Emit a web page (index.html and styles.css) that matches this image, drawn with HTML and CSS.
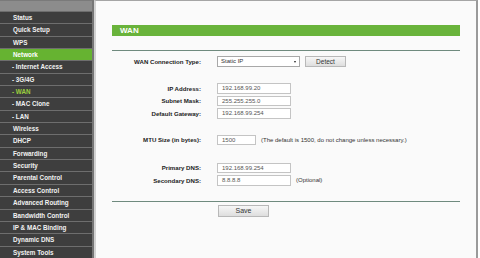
FILE: index.html
```html
<!DOCTYPE html>
<html>
<head>
<meta charset="utf-8">
<link rel="stylesheet" href="styles.css">
</head>
<body>
<div class="page">
  <nav class="sidebar">
    <div class="side-top"></div>
    <ul class="menu">
      <li>Status</li>
      <li>Quick Setup</li>
      <li>WPS</li>
      <li class="active">Network</li>
      <li class="sub">- Internet Access</li>
      <li class="sub">- 3G/4G</li>
      <li class="sub current">- WAN</li>
      <li class="sub">- MAC Clone</li>
      <li class="sub">- LAN</li>
      <li>Wireless</li>
      <li>DHCP</li>
      <li>Forwarding</li>
      <li>Security</li>
      <li>Parental Control</li>
      <li>Access Control</li>
      <li>Advanced Routing</li>
      <li>Bandwidth Control</li>
      <li>IP &amp; MAC Binding</li>
      <li>Dynamic DNS</li>
      <li>System Tools</li>
    </ul>
  </nav>
  <main class="main">
    <div class="title-bar">WAN</div>
    <div class="rule"></div>
    <div class="row row-conn">
      <span class="label">WAN Connection Type:</span>
      <span class="field">
        <span class="select">Static IP<span class="arrow"></span></span>
        <span class="btn btn-detect">Detect</span>
      </span>
    </div>
    <div class="row row-first">
      <span class="label">IP Address:</span>
      <span class="field"><span class="input">192.168.99.20</span></span>
    </div>
    <div class="row">
      <span class="label">Subnet Mask:</span>
      <span class="field"><span class="input">255.255.255.0</span></span>
    </div>
    <div class="row">
      <span class="label">Default Gateway:</span>
      <span class="field"><span class="input">192.168.99.254</span></span>
    </div>
    <div class="row row-mtu">
      <span class="label">MTU Size (in bytes):</span>
      <span class="field"><span class="input input-short">1500</span><span class="note">(The default is 1500, do not change unless necessary.)</span></span>
    </div>
    <div class="row row-dns">
      <span class="label">Primary DNS:</span>
      <span class="field"><span class="input">192.168.99.254</span></span>
    </div>
    <div class="row">
      <span class="label">Secondary DNS:</span>
      <span class="field"><span class="input">8.8.8.8</span><span class="note">(Optional)</span></span>
    </div>
    <div class="rule rule-bottom"></div>
    <div class="save-row">
      <span class="btn btn-save">Save</span>
    </div>
  </main>
</div>
</body>
</html>
```
FILE: styles.css
```css
* { box-sizing: border-box; }
html, body { margin: 0; padding: 0; }
body {
  width: 480px;
  height: 258px;
  overflow: hidden;
  background: #ffffff;
  font-family: "Liberation Sans", Arial, sans-serif;
}
.page {
  display: flex;
  height: 258px;
}
.sidebar {
  width: 94px;
  flex: none;
  background: #3e3e3e;
  border-right: 2px solid #767676;
  display: flex;
  flex-direction: column;
}
.side-top {
  height: 11px;
  background: #8c8c8c;
  border-top: 1px solid #7a7a7a;
}
.menu {
  list-style: none;
  margin: 0;
  padding: 0;
}
.menu li {
  height: 12.35px;
  border-top: 1px solid #6e6e6e;
  padding-left: 13px;
  color: #f2f2f2;
  font-weight: bold;
  font-size: 6.3px;
  line-height: 11.35px;
  white-space: nowrap;
  background: #3e3e3e;
}
.menu li.sub { padding-left: 12px; }
.menu li.active {
  background: #66b331;
  color: #ffffff;
}
.menu li.current { color: #9ccf3e; }
.main {
  flex: none;
  width: 384px;
  background: #fafafa;
  border-left: 2px solid #d2d2d2;
  border-right: 2px solid #9a9a9a;
  border-top: 1px solid #a5a5a5;
  padding: 24px 0 0 16px;
}
.title-bar {
  width: 348px;
  height: 11px;
  background: #69b33b;
  color: #ffffff;
  font-weight: bold;
  font-size: 8px;
  line-height: 11px;
  padding-left: 8px;
}
.rule {
  width: 348px;
  height: 1px;
  background: #6f8a7e;
  margin-top: 14px;
}
.row {
  display: grid;
  grid-template-columns: 89px auto;
  column-gap: 16px;
  align-items: center;
  height: 12.5px;
}
.row-conn { margin-top: 4.5px; height: 12px; }
.row-first { margin-top: 14.5px; }
.row-mtu { margin-top: 14px; }
.row-dns { margin-top: 15.5px; }
.label {
  text-align: right;
  font-weight: bold;
  font-size: 6.1px;
  color: #222;
  white-space: nowrap;
}
.field {
  display: flex;
  align-items: center;
  gap: 5px;
}
.input {
  display: block;
  width: 74px;
  height: 10.5px;
  background: #ffffff;
  border: 1px solid #c4c4c4;
  font-size: 6px;
  line-height: 8.5px;
  padding-left: 4px;
  color: #555;
}
.input-short { width: 39px; }
.note {
  font-size: 6px;
  color: #333;
  white-space: nowrap;
}
.select {
  position: relative;
  display: block;
  width: 83px;
  height: 11px;
  background: #ffffff;
  border: 1px solid #a8a8a8;
  font-size: 6px;
  line-height: 9px;
  padding-left: 3px;
  color: #333;
}
.arrow {
  position: absolute;
  right: 3px;
  top: 3.5px;
  width: 0;
  height: 0;
  border-left: 1.5px solid transparent;
  border-right: 1.5px solid transparent;
  border-top: 2.5px solid #222;
}
.btn {
  display: block;
  height: 11px;
  background: linear-gradient(#f7f7f7, #dedede);
  border: 1px solid #b8b8b8;
  text-align: center;
  font-size: 6.5px;
  line-height: 9px;
  color: #333;
}
.btn-detect { width: 41px; }
.rule-bottom { margin-top: 14.25px; }
.save-row {
  padding-left: 106px;
  margin-top: 3.5px;
}
.btn-save {
  width: 51px;
  height: 12px;
  font-size: 7px;
  line-height: 10px;
}
```
